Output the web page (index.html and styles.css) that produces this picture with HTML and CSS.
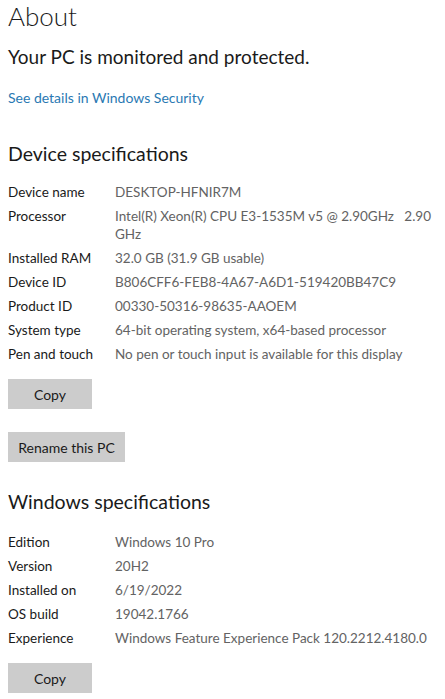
FILE: index.html
```html
<!DOCTYPE html>
<html lang="en">
<head>
<meta charset="utf-8">
<title>About</title>
<link rel="stylesheet" href="styles.css">
</head>
<body>
<main class="page">
  <h1 class="title">About</h1>
  <p class="status">Your PC is monitored and protected.</p>
  <a class="link" href="#">See details in Windows Security</a>

  <h2 class="section">Device specifications</h2>
  <dl class="specs">
    <dt>Device name</dt><dd>DESKTOP-HFNIR7M</dd>
    <dt>Processor</dt><dd>Intel(R) Xeon(R) CPU E3-1535M v5 @ 2.90GHz&nbsp;&nbsp; 2.90 GHz</dd>
    <dt>Installed RAM</dt><dd>32.0 GB (31.9 GB usable)</dd>
    <dt>Device ID</dt><dd>B806CFF6-FEB8-4A67-A6D1-519420BB47C9</dd>
    <dt>Product ID</dt><dd>00330-50316-98635-AAOEM</dd>
    <dt>System type</dt><dd>64-bit operating system, x64-based processor</dd>
    <dt>Pen and touch</dt><dd>No pen or touch input is available for this display</dd>
  </dl>
  <button class="btn btn-copy">Copy</button>
  <button class="btn btn-rename">Rename this PC</button>

  <h2 class="section section-win">Windows specifications</h2>
  <dl class="specs specs-win">
    <dt>Edition</dt><dd>Windows 10 Pro</dd>
    <dt>Version</dt><dd>20H2</dd>
    <dt>Installed on</dt><dd>6/19/2022</dd>
    <dt>OS build</dt><dd>19042.1766</dd>
    <dt>Experience</dt><dd>Windows Feature Experience Pack 120.2212.4180.0</dd>
  </dl>
  <button class="btn btn-copy">Copy</button>
</main>
</body>
</html>
```
FILE: styles.css
```css
html, body {
  margin: 0;
  padding: 0;
  background: #ffffff;
}
body {
  font-family: "Lato", "Noto Sans", sans-serif;
  color: #1a1a1a;
  overflow: hidden;
}
.page {
  display: flex;
  flex-direction: column;
  align-items: flex-start;
  padding: 0 0 0 8px;
}
.title {
  margin: 0;
  font-size: 26px;
  font-weight: 300;
  line-height: 32px;
}
.status {
  margin: 13px 0 0;
  font-size: 19px;
  line-height: 24px;
  font-weight: 400;
}
.link {
  margin-top: 20px;
  font-size: 14px;
  line-height: 18px;
  color: #2a79b3;
  text-decoration: none;
}
.section {
  margin: 35px 0 0;
  font-size: 19.5px;
  line-height: 24px;
  font-weight: 400;
}
.section-win {
  margin-top: 28px;
}
.specs {
  margin: 17px 0 0;
  display: grid;
  grid-template-columns: 107px 318px;
  row-gap: 6px;
  font-size: 13.5px;
  line-height: 18px;
}
.specs-win {
  margin-top: 19px;
}
.specs dt {
  margin: 0;
  color: #1a1a1a;
}
.specs dd {
  margin: 0;
  color: #636363;
}
.btn {
  border: none;
  background: #cccccc;
  font-family: inherit;
  font-size: 14px;
  color: #1a1a1a;
  height: 30px;
  padding: 0;
  margin-top: 16px;
}
.btn-copy {
  width: 84px;
}
.btn-rename {
  width: 117px;
  margin-top: 23px;
}
```
